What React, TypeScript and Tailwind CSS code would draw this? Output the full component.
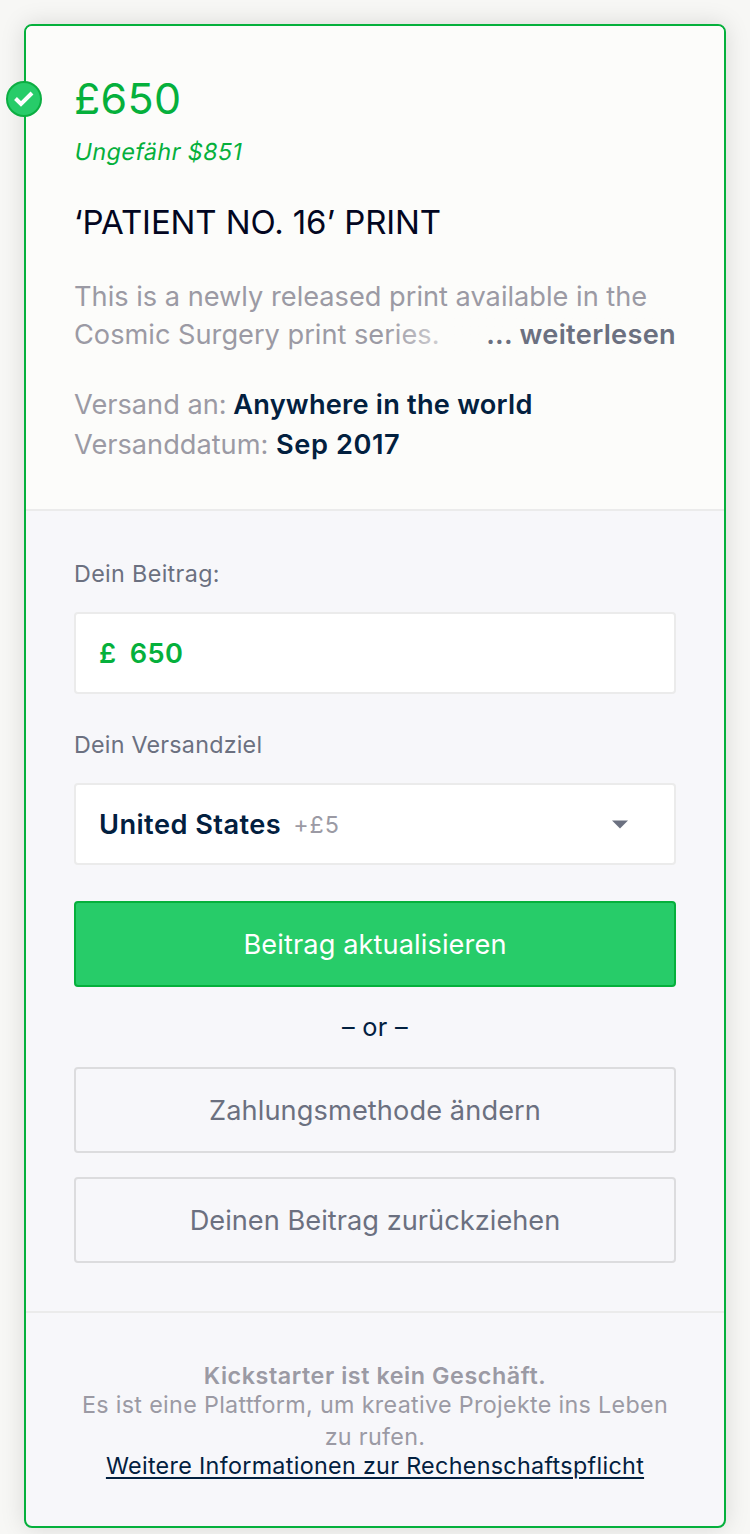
import React from 'react';

function T({ className = '', children }: { className?: string; children: React.ReactNode }) {
  return <span className={'block w-fit whitespace-nowrap ' + className}>{children}</span>;
}

export default function App() {
  return (
    <div className="h-[1534px] w-[750px] overflow-hidden bg-[#f7f7f5] px-6 pt-6 font-['Inter',sans-serif] text-[#9b9aa4]">
      <main className="relative flex h-[1504px] flex-col rounded-lg border-2 border-[#05b03c] bg-[#f7f7fa] shadow-[0_0_24px_rgba(0,0,0,0.13)]">
        <div className="absolute -left-5 top-[55px] flex size-9 items-center justify-center rounded-full border-2 border-[#0cae42] bg-[#27cc69]">
          <svg className="-mt-px" width="20" height="16" viewBox="0 0 20 16" fill="none" stroke="white" strokeWidth="4"><path d="M1.5 7.5 7 13 18 2" /></svg>
        </div>
        <section className="h-[485px] rounded-t-md border-b-2 border-[#ebebeb] bg-[#fcfcfa] px-12 pt-12">
          <T className="text-[43px] leading-[48px] tracking-[0.3px] text-[#05b03c]">£650</T>
          <T className="ml-px mt-3.5 -skew-x-[10deg] text-[23.3px] leading-[32px] tracking-[0.4px] text-[#05b03c]">Ungefähr $851</T>
          <T className="mt-[34px] text-[33px] leading-[40px] tracking-[-0.1px] text-[#020621]">‘PATIENT NO. 16’ PRINT</T>
          <div className="relative mt-9 text-[27.2px] leading-[38px]">
            <T>This is a newly released print available in the</T>
            <T>Cosmic Surgery print series.</T>
            <div className="absolute bottom-0 right-0 flex h-[38px] w-[290px] justify-end bg-gradient-to-r from-[#fcfcfa00] to-[#fcfcfa] to-35% font-semibold tracking-[0.3px] text-[#6b7080]"><T>... weiterlesen</T></div>
          </div>
          <div className="mt-[31px] text-[27.2px] leading-[40px]">
            <T>Versand an: <b className="-ml-px font-semibold tracking-[0.22px] text-[#02203f]">Anywhere in the world</b></T>
            <T>Versanddatum: <b className="font-semibold tracking-[0.6px] text-[#02203f]">Sep 2017</b></T>
          </div>
        </section>
        <section className="h-[802px] border-b-2 border-[#ebebeb] px-12 pt-[46px]">
          <T className="text-[23.3px] leading-[34px] tracking-[0.35px] text-[#6b7080]">Dein Beitrag:</T>
          <div className="mt-[21px] flex h-[82px] items-center rounded border-2 border-[#ebebeb] bg-white px-[23px] pt-0.5 text-[27.2px] font-semibold tracking-[0.5px] text-[#05b03c]"><T>£</T><T className="ml-[13px]">650</T></div>
          <T className="mt-[34px] text-[23.3px] leading-[34px] tracking-[0.22px] text-[#6b7080]">Dein Versandziel</T>
          <div className="mt-[21px] flex h-[82px] items-center rounded border-2 border-[#ebebeb] bg-white px-[23px]">
            <T className="mt-0.5 text-[27.2px] font-semibold tracking-[0.45px] text-[#02203f]">United States</T><T className="ml-3 mt-0.5 text-[23.3px] tracking-[1px]">+£5</T>
            <svg className="ml-auto mr-[22px]" width="18" height="9"><path d="M1 .5H17L9 8.5Z" fill="#6b7080" /></svg>
          </div>
          <button className="mt-9 flex h-[86px] w-full items-center justify-center rounded border-2 border-[#05b03c] bg-[#27cc69] pt-0.5 text-[27.2px] tracking-[0.1px] text-white"><T>Beitrag aktualisieren</T></button>
          <div className="flex h-20 items-center justify-center text-[25.3px] tracking-[0.3px] text-[#02203f]"><T>– or –</T></div>
          <button className="flex h-[86px] w-full items-center justify-center rounded border-2 border-[#dcdcde] pt-0.5 text-[27.2px] tracking-[0.1px] text-[#6b7080]"><T>Zahlungsmethode ändern</T></button>
          <button className="mt-6 flex h-[86px] w-full items-center justify-center rounded border-2 border-[#dcdcde] pt-0.5 text-[27.2px] tracking-[0.03px] text-[#6b7080]"><T>Deinen Beitrag zurückziehen</T></button>
        </section>
        <footer className="flex flex-col items-center pt-12 text-[23.3px] tracking-[0.33px]">
          <T className="font-semibold leading-[30px] tracking-[0.57px]">Kickstarter ist kein Geschäft.</T>
          <T className="leading-[28px]">Es ist eine Plattform, um kreative Projekte ins Leben</T>
          <T className="leading-[36px]">zu rufen.</T>
          <T className="leading-[22px] tracking-[0.32px] text-[#02203f] underline decoration-2 underline-offset-[3px]">Weitere Informationen zur Rechenschaftspflicht</T>
        </footer>
      </main>
    </div>
  );
}
